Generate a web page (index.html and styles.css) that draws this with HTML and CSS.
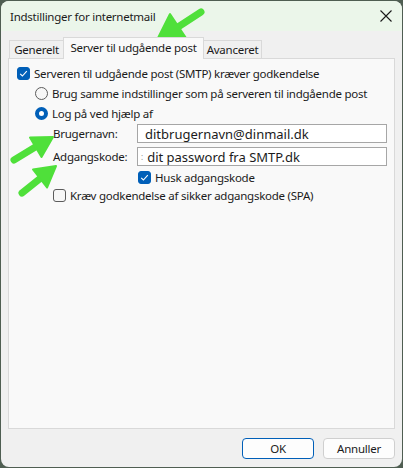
FILE: index.html
```html
<!DOCTYPE html>
<html lang="da">
<head>
<meta charset="utf-8">
<title>Indstillinger for internetmail</title>
<link rel="stylesheet" href="styles.css">
</head>
<body>
<div class="window">
  <div class="titlebar">
    <span class="title">Indstillinger for internetmail</span>
    <svg class="close" width="12" height="12" viewBox="0 0 12 12"><path d="M0.5 0.5 L11.5 11.5 M11.5 0.5 L0.5 11.5" stroke="#1a1a1a" stroke-width="1.1" fill="none"/></svg>
  </div>
  <div class="content">
    <div class="tabs">
      <div class="tab first">Generelt</div>
      <div class="tab active">Server til udgående post</div>
      <div class="tab last">Avanceret</div>
    </div>
    <div class="panel">
      <div class="row">
        <span class="cb checked"><svg width="13" height="13" viewBox="0 0 13 13"><path d="M3.2 6.8 L5.4 9 L9.8 4.2" stroke="#fff" stroke-width="1.1" fill="none"/></svg></span>
        <span class="label">Serveren til udgående post (SMTP) kræver godkendelse</span>
      </div>
      <div class="row indent1">
        <span class="radio"></span>
        <span class="label">Brug samme indstillinger som på serveren til indgående post</span>
      </div>
      <div class="row indent1">
        <span class="radio on"></span>
        <span class="label">Log på ved hjælp af</span>
      </div>
      <div class="fields">
        <span class="flabel">Brugernavn:</span>
        <div class="input">ditbrugernavn@dinmail.dk</div>
        <span class="flabel">Adgangskode:</span>
        <div class="input pw"><span class="caret">:</span>dit password fra SMTP.dk</div>
      </div>
      <div class="row small husk">
        <span class="cb checked"><svg width="13" height="13" viewBox="0 0 13 13"><path d="M3.2 6.8 L5.4 9 L9.8 4.2" stroke="#fff" stroke-width="1.1" fill="none"/></svg></span>
        <span class="label">Husk adgangskode</span>
      </div>
      <div class="row small indent2">
        <span class="cb"></span>
        <span class="label">Kræv godkendelse af sikker adgangskode (SPA)</span>
      </div>
    </div>
    <div class="buttons">
      <button class="btn default">OK</button>
      <button class="btn">Annuller</button>
    </div>
  </div>
</div>
<svg class="arrows" width="403" height="468" viewBox="0 0 403 468">
  <g fill="#4fe03a" stroke="#4fe03a" stroke-linejoin="round">
    <line x1="201" y1="12" x2="178" y2="27" stroke-width="7" stroke-linecap="round"/>
    <polygon points="157,40 186,38 170,14" stroke-width="2"/>
    <line x1="14" y1="160" x2="37" y2="146" stroke-width="7" stroke-linecap="round"/>
    <polygon points="53,137 41.5,157 30,137.5" stroke-width="2"/>
    <line x1="22" y1="193" x2="42" y2="177" stroke-width="7" stroke-linecap="round"/>
    <polygon points="56,166 47,187.5 33,169.5" stroke-width="2"/>
  </g>
</svg>
</body>
</html>
```
FILE: styles.css
```css
* { box-sizing: border-box; }
html, body { margin: 0; padding: 0; }
body {
  width: 403px;
  height: 468px;
  background: #4f5e52;
  font-family: "Noto Sans", "Open Sans", sans-serif;
  font-size: 11.5px;
  letter-spacing: -0.25px;
  color: #1b1b1b;
  position: relative;
  overflow: hidden;
}
.window {
  position: absolute;
  left: 1px; top: 1px;
  width: 401px;
  height: 466px;
  border-radius: 8px;
  overflow: hidden;
  background: #f0f0f0;
  display: flex;
  flex-direction: column;
}
.titlebar {
  height: 30px;
  background: #ebf6ea;
  display: flex;
  align-items: center;
  justify-content: space-between;
  padding: 0 10px 0 9px;
  flex: none;
}
.title { font-size: 11.5px; }
.close { display: block; }
.content {
  flex: 1;
  display: flex;
  flex-direction: column;
  padding: 6px 7px 7px 7px;
}
.tabs {
  display: flex;
  align-items: flex-end;
  height: 21px;
  padding-left: 1px;
  position: relative;
  z-index: 1;
}
.tab {
  height: 18px;
  border: 1px solid #d9d9d9;
  border-bottom: none;
  background: #f0f0f0;
  padding: 0;
  display: flex;
  align-items: center;
  justify-content: center;
  white-space: nowrap;
}
.tab.first { width: 54px; border-right: none; }
.tab.active {
  height: 22px;
  margin-bottom: -1px;
  background: #f9f9f9;
  width: 141px;
  align-items: flex-start;
  padding-top: 2px;
}
.tab.last { width: 58px; border-left: none; }
.panel {
  height: 371px;
  border: 1px solid #d9d9d9;
  background: #f9f9f9;
  padding: 4px 7px 0 8px;
  display: flex;
  flex-direction: column;
}
.row {
  height: 20px;
  display: flex;
  align-items: center;
  gap: 4px;
  white-space: nowrap;
}
.row.small { height: 18px; }
.indent1 { padding-left: 18px; }
.indent2 { padding-left: 36px; }
.husk { padding-left: 121px; margin-top: 2px; }
.cb {
  width: 13px; height: 13px;
  border-radius: 3px;
  border: 1px solid #5c5c5c;
  background: #f7f7f7;
  flex: none;
  display: block;
}
.cb svg { display: block; margin: -1px; }
.cb.checked { background: #005fb8; border-color: #005fb8; }
.radio {
  width: 13px; height: 13px;
  border-radius: 50%;
  border: 1px solid #5c5c5c;
  background: #f7f7f7;
  flex: none;
}
.radio.on {
  border: 4px solid #005fb8;
  background: #fff;
}
.fields {
  display: grid;
  grid-template-columns: 84px 1fr;
  row-gap: 4px;
  align-items: center;
  padding-left: 36px;
  margin-top: 1px;
}
.input {
  height: 19px;
  border: 1px solid #a6a6a6;
  background: #fff;
  font-size: 13px;
  letter-spacing: 0;
  padding-left: 7px;
  display: flex;
  align-items: center;
  white-space: nowrap;
  overflow: hidden;
}
.input.pw { padding-left: 3px; }
.caret { color: #8a8a8a; font-size: 8px; margin-right: 4px; }
.buttons {
  display: flex;
  justify-content: flex-end;
  gap: 9px;
  margin-top: 9px;
}
.btn {
  width: 72px;
  height: 21px;
  border: 1px solid #cfcfcf;
  border-radius: 4px;
  background: #fdfdfd;
  font-family: inherit;
  font-size: 11.5px;
  letter-spacing: inherit;
  color: #1b1b1b;
  padding: 0;
}
.btn.default { border-color: #005fb8; }
.arrows {
  position: absolute;
  left: 0; top: 0;
  pointer-events: none;
}
```
